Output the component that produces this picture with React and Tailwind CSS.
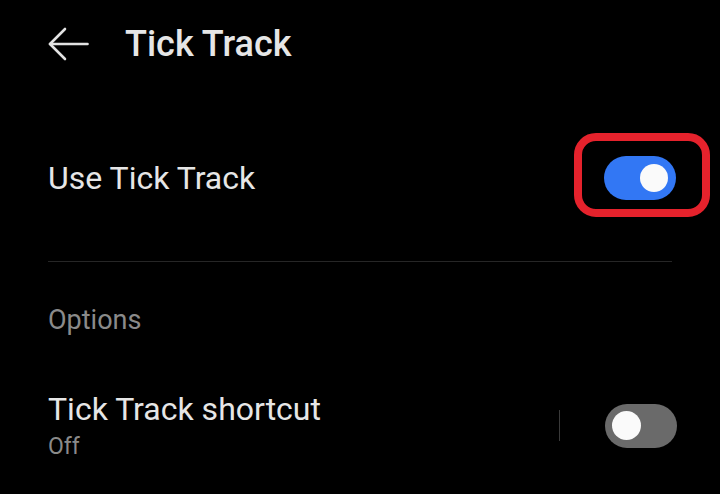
export default function App() {
  return (
    <div className="w-[720px] h-[494px] overflow-hidden bg-black text-[#e6e6e6] font-['Roboto',sans-serif]">
      {/* header */}
      <div className="flex h-[88px] items-center gap-[36px] pl-[48px]">
        <svg width="41" height="34" viewBox="0 0 41 34" fill="none" stroke="#e2e2e2" strokeWidth="2.6" strokeLinecap="round" strokeLinejoin="round">
          <path d="M39.5 17H2" />
          <path d="M17 2L2 17L17 32" />
        </svg>
        <h1 className="text-[36px] font-medium leading-none">Tick Track</h1>
      </div>

      {/* main switch */}
      <div className="flex h-[173px] items-center justify-between pl-[48px] pr-[44px] pt-[7px]">
        <span className="text-[32px] leading-none">Use Tick Track</span>
        <div className="relative">
          <div className="absolute left-[-30px] top-[-23px] h-[84px] w-[136px] rounded-[22px] border-[8px] border-[#e5222c]"></div>
          <div className="flex h-[44px] w-[72px] items-center justify-end rounded-full bg-[#3277f4] pr-[8px]">
            <div className="h-[28px] w-[28px] rounded-full bg-[#fafafa]"></div>
          </div>
        </div>
      </div>

      <div className="mx-[48px] h-px bg-[#262626]"></div>

      <div className="pl-[48px] pt-[45px] text-[27px] leading-none text-[#8a8a8a]">Options</div>

      {/* shortcut row */}
      <div className="flex items-center justify-between pl-[48px] pr-[43px] pt-[59px]">
        <div className="flex flex-col gap-[10px]">
          <span className="text-[32px] leading-none">Tick Track shortcut</span>
          <span className="text-[23px] leading-none text-[#8a8a8a]">Off</span>
        </div>
        <div className="flex items-center gap-[45px]">
          <div className="h-[31px] w-px bg-[#3a3a3a]"></div>
          <div className="flex h-[44px] w-[72px] items-center rounded-full bg-[#6a6a6a] pl-[7px]">
            <div className="h-[29px] w-[29px] rounded-full bg-[#fafafa]"></div>
          </div>
        </div>
      </div>
    </div>
  );
}
